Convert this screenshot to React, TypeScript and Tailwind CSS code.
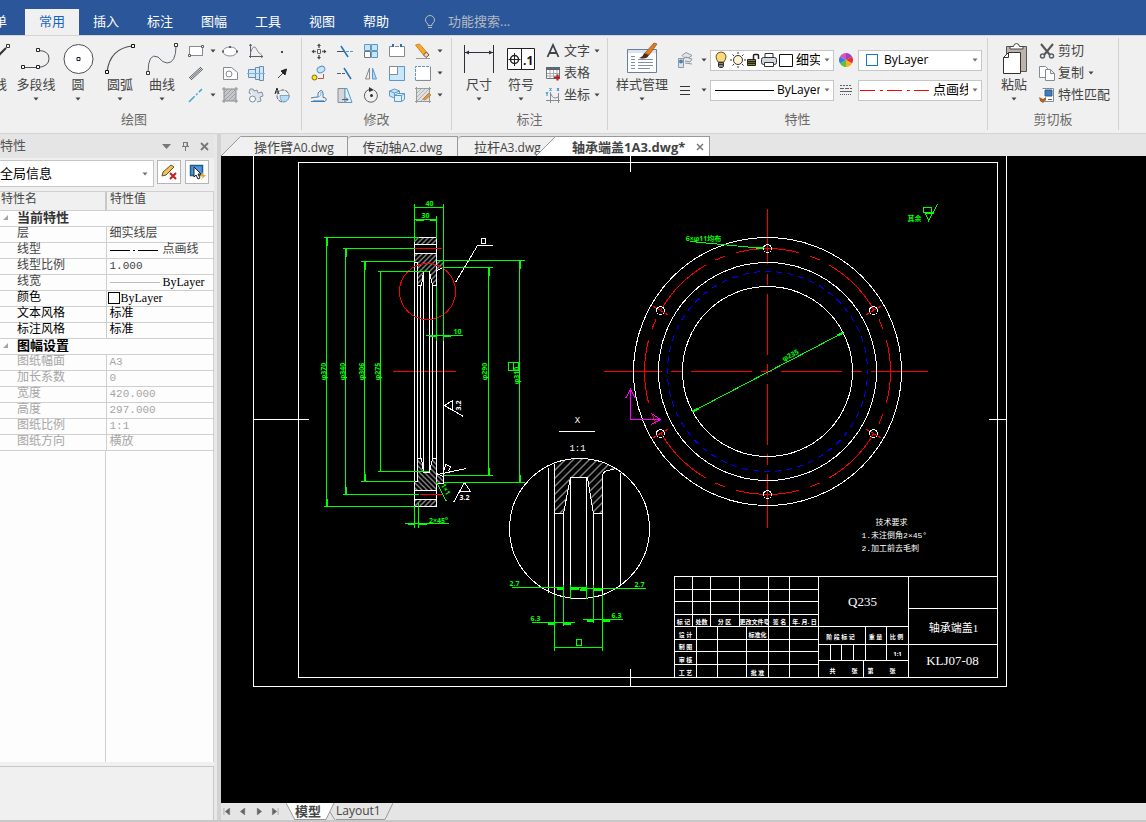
import React from 'react';

const RotatedText: React.FC<{ x: number; y: number; children: React.ReactNode; angle?: number }> = ({ x, y, children, angle = -90 }) => (
  <text x={x} y={y} transform={`rotate(${angle} ${x} ${y})`} textAnchor="middle">{children}</text>
);

const Caret: React.FC<{ className?: string }> = ({ className = 'text-[#444]' }) => (
  <svg width="6" height="4" viewBox="0 0 6 4" className={`flex-shrink-0 ${className}`} aria-hidden="true">
    <path d="M0.5 0.5h5L3 3.5z" fill="currentColor" />
  </svg>
);

const Glyph: React.FC<{ size?: number; children: React.ReactNode }> = ({ size = 20, children }) => (
  <svg width={size} height={size} viewBox={`0 0 ${size} ${size}`} fill="none" stroke="#5a5f68" className="flex-shrink-0" aria-hidden="true">
    {children}
  </svg>
);

const BigButton: React.FC<{ label: string; icon: React.ReactNode; className?: string }> = ({ label, icon, className = 'w-[42px]' }) => (
  <button type="button" className={`flex h-[70px] flex-shrink-0 flex-col items-center ${className}`}>
    <span className="flex h-9 items-center">{icon}</span>
    <span className="h-[18px] leading-[17px] whitespace-nowrap">{label}</span>
    <span className="flex h-[10px] items-center"><Caret /></span>
  </button>
);

const Group: React.FC<{ title: string; className?: string; children: React.ReactNode }> = ({ title, className = '', children }) => (
  <section aria-label={title} className="flex flex-shrink-0 flex-col border-r border-[#d2d2d2]">
    <div className={`flex h-[72px] pt-0.5 ${className}`}>{children}</div>
    <div className="h-5 text-center leading-[18px] text-[#6a6a6a]">{title}</div>
  </section>
);

const DRAW_TOOLS: { name: string; menu?: boolean; art: React.ReactNode }[] = [
  { name: '矩形', menu: true, art: <><rect x="3.5" y="5.5" width="13" height="9" fill="#fff" stroke="#858b93" /><path d="M2.500 13.500h2v2h-2zM15.500 4.500h2v2h-2z" fill="#fff" /></> },
  { name: '椭圆', art: <><ellipse cx="10" cy="10.500" rx="7" ry="4.500" fill="#fff" stroke="#858b93" /><path d="M2 9.500h2v2H2zM16 9.500h2v2h-2zM9 5h2v2H9z" fill="#5a5f68" stroke="none" /></> },
  { name: '公式曲线', art: <><path d="M4.500 3v14M3 15.500h14M3.500 5l1-2 1 2M15 14.500l2 1-2 1" /><path d="M4.500 12q3-10 6-4t5 5" stroke="#858b93" /></> },
  { name: '点', art: <rect x="9" y="10" width="2" height="2" fill="#444" stroke="none" /> },
  { name: '平行线', art: <path d="M3 15L15 4M5 17L17 6M4 16L16 5" stroke="#555b66" /> },
  { name: '正多边形', art: <><path d="M3.500 4.500h8l6 5v7h-14z" fill="#fff" stroke="#858b93" /><circle cx="9" cy="11" r="3" stroke="#858b93" /></> },
  { name: '孔/轴', art: <><path d="M2.500 6.500h7v8h-7zM9.500 4.500h4v12h-4zM13.500 3.500h4v14h-4z" fill="#d3e6f5" stroke="#6a8caf" /><path d="M1 10.500h18" stroke="#6bb7ee" /></> },
  { name: '箭头', art: <><path d="M6 15l6-6" stroke="#444" /><path d="M14.500 6l-1.500 6-4-4z" fill="#222" stroke="#222" /></> },
  { name: '中心线', menu: true, art: <path d="M3 17L16 4" stroke="#3da7dc" strokeWidth="1.500" strokeDasharray="8 2 2 2" /> },
  { name: '剖面线', art: <><path d="M4 4h12v12H4z" fill="#c5c8cb" stroke="none" /><path d="M4 2v16M16 2v16M2 4h16M2 16h16" stroke="#858b93" /><path d="M4 8l4-4M4 12l8-8M4 16L16 4M8 16l8-8M12 16l4-4" stroke="#9ba0a5" /></> },
  { name: '齿形', art: <><path d="M4 4h3l1 2 3-1 1 3 4-1 1 4-3 1 1 4-4 1M4 4L3 8l2 1" fill="#dbe4ee" stroke="#8791a0" /><circle cx="6.500" cy="14" r="3" fill="#fff" stroke="#7a869a" /></> },
  { name: '标注圆', art: <><path d="M3 9L5 3l2 6M3.500 7h3" stroke="#222" /><circle cx="11" cy="11" r="6" strokeDasharray="4 1" /><path d="M8 10.500h9q0 6-5 6-4 0-4-6z" fill="#b5def6" stroke="#79a9cc" /></> },
];

const MODIFY_TOOLS: { name: string; menu?: boolean; art: React.ReactNode }[] = [
  { name: '平移', art: <><path d="M8.500 8.500h3v4h-3z" /><path d="M10 4v3M10 14v3M4 10.500h3M13 10.500h3" strokeWidth="1.500" /><path d="M10 2.500l2 2.500H8zM10 18.500l2-2.500H8zM2.500 10.500L5 8.500v4zM17.500 10.500L15 8.500v4z" fill="#444" stroke="none" /></> },
  { name: '裁剪', art: <><path d="M2 10.500h8" stroke="#49505b" /><path d="M11 10.500h7" stroke="#3da7dc" strokeDasharray="3 1" /><path d="M6 5l7 11" stroke="#2372bd" strokeWidth="1.500" /></> },
  { name: '阵列', art: <><path d="M3.500 3.500h6v6h-6zM10.500 3.500h6v6h-6zM10.500 10.500h6v6h-6z" fill="#c8e4f6" stroke="#5b9ac8" /><path d="M3.500 10.500h6v6h-6z" fill="#fff" stroke="#6a7683" /></> },
  { name: '打断', art: <><path d="M5 5.500H2.500v10h15v-10H15M8 5.500h4" fill="#fff" stroke="#858b93" /><path d="M6 3v3M14 3v3" stroke="#2372bd" strokeWidth="2" /></> },
  { name: '删除', menu: true, art: <><path d="M2.500 4l4-1 7 8-3 3z" fill="#f7a72d" stroke="#d88a1e" /><path d="M10.500 14l3-3 2.500 3-3 2.500z" fill="#e9d5c3" stroke="#704c38" /><path d="M3 17.500h14" stroke="#999" /></> },
  { name: '平移复制', art: <><ellipse cx="12" cy="6.500" rx="4" ry="3" fill="#c8e4f6" stroke="#5b9ac8" transform="rotate(-25 12 6.500)" /><circle cx="5.500" cy="14.500" r="2.500" fill="#ffe500" stroke="#776a2d" /><path d="M9 15.500h5.500V11" stroke="#b3573e" /></> },
  { name: '延伸', art: <><path d="M2 10.500h8" strokeDasharray="4 1" /><path d="M9 5l7 11" stroke="#2372bd" strokeWidth="1.500" /></> },
  { name: '镜像', art: <><path d="M8.500 5v11h-4z" stroke="#858b93" /><path d="M11.500 5v11h4z" fill="#b4d9f2" stroke="#5b9ac8" /></> },
  { name: '缩放', art: <><path d="M2.500 3.500h15v14h-15z" fill="#c8e8fa" stroke="#5b9ac8" /><path d="M2.500 3.500h8v8h-8z" fill="#fff" stroke="#858b93" /></> },
  { name: '分解', menu: true, art: <><path d="M3 3.500h15v13H3z" fill="#fff" stroke="none" /><path d="M2.500 17V3.500H17" stroke="#5b9ac8" strokeDasharray="3 1" /><path d="M2.500 17.500h15v-14" stroke="#858b93" /></> },
  { name: '等距线', art: <><path d="M2 16.500h14q3-3-1-4h-1V8q-1-5-5 0v4q-3 0-7 1" stroke="#52789d" /><path d="M4 15.500h11M9 12q3 0 3-5" stroke="#6bb7ee" /></> },
  { name: '拉伸', art: <><path d="M3 3.500h7v14H3z" fill="#d5d8db" stroke="#858b93" /><path d="M10 3.500h2l5 14h-7z" fill="#dff1fb" stroke="#5b9ac8" /><path d="M7 14.500h6M11 12.500l2 2-2 2" /></> },
  { name: '旋转', art: <><path d="M8 4.500a6.500 6.500 0 1 0 5 .5" /><path d="M8 2l5 3-5 2z" fill="#333" stroke="none" /><circle cx="10.500" cy="10.500" r="1.500" fill="#333" stroke="none" /></> },
  { name: '块', art: <><path d="M2.500 6l5-2 5 2-5 2zM2.500 6v5l5 2V8M12.500 6v3" fill="#c8e4f6" stroke="#5b9ac8" /><path d="M7.500 10.500l3-2h7v6l-3 2h-7zM7.500 10.500h7v6M14.500 10.500l3-2" fill="#dff1fb" stroke="#5b9ac8" /></> },
  { name: '剖面编辑', menu: true, art: <><path d="M4 4h12v12H4z" fill="#e0e0e0" stroke="none" /><path d="M2 3.500h16M3.500 2v16M2 16.500h16M16.500 2v16" stroke="#949a9f" /><path d="M4 8l4-4M4 12l8-8M4 16L16 4M8 16l8-8" stroke="#b0b0b0" /><path d="M10 14l6-6 2 2-6 5z" fill="#e49b2d" stroke="#8d5e25" strokeWidth=".5" /></> },
];

const ToolCell: React.FC<{ name: string; children: React.ReactNode }> = ({ name, children }) => (
  <button type="button" aria-label={name} className="flex h-[22px] w-[26px] items-center justify-center">
    <Glyph>{children}</Glyph>
  </button>
);

const MenuCell: React.FC<{ name: string; show?: boolean }> = ({ name, show = true }) => (
  show ? (
    <button type="button" aria-label={`${name}选项`} className="flex h-[22px] w-2 items-center justify-center">
      <Caret />
    </button>
  ) : <span />
);

interface ComboProps {
  label: string;
  options: string[];
  children?: React.ReactNode;
  className?: string;
}

const Combo: React.FC<ComboProps> = ({ label, options, children, className = '' }) => (
  <label className={`flex items-center border border-[#c6c6c6] bg-white text-black ${className}`}>
    {children}
    <select aria-label={label} className="min-w-0 flex-1 appearance-none overflow-hidden bg-transparent whitespace-nowrap outline-none">
      {options.map(o => <option key={o}>{o}</option>)}
    </select>
    <Caret className="mr-[3px] ml-1 text-[#6e6e6e]" />
  </label>
);

const TextTool: React.FC<{ label: string; menu?: boolean; icon: React.ReactNode; iconClass: string }> = ({ label, menu, icon, iconClass }) => (
  <button type="button" className="flex h-[22px] items-center">
    <span className={`flex justify-center ${iconClass}`}>{icon}</span>
    <span className="whitespace-nowrap">{label}</span>
    {menu && <span className="flex w-[14px] justify-center"><Caret /></span>}
  </button>
);

const MENU_TABS = ['插入', '标注', '图幅', '工具', '视图', '帮助'];

const MenuBar = () => (
  <nav className="flex h-[35px] flex-shrink-0 items-end overflow-hidden bg-[#2b579a] text-white">
    <button type="button" className="mr-1 -ml-[33px] h-[26px] w-[54px] flex-shrink-0">菜单</button>
    <button type="button" className="h-[26px] w-[54px] flex-shrink-0 bg-[#f0f0f0] text-[#1565c0]">常用</button>
    {MENU_TABS.map(t => (
      <button key={t} type="button" className="h-[26px] w-[54px] flex-shrink-0">{t}</button>
    ))}
    <label className="ml-[21px] flex h-[26px] items-center gap-3 text-[#b5bac2]">
      <svg width="12" height="14" viewBox="0 0 12 14" fill="none" stroke="currentColor" aria-hidden="true">
        <path d="M4 10.500V9Q1.500 7.500 1.500 5a4.500 4.500 0 0 1 9 0Q10.500 7.500 8 9v1.500zM4 12.500h4" />
      </svg>
      <input aria-label="功能搜索" placeholder="功能搜索..." className="w-28 bg-transparent outline-none placeholder:text-[#b5bac2]" />
    </label>
  </nav>
);

const Ribbon = () => (
  <div className="flex h-[99px] flex-shrink-0 overflow-hidden border-y border-[#d5d5d5] bg-[#f0f0f0] pt-0.5 pb-[3px] text-[#444]">
    <div className="-ml-[33px] flex flex-shrink-0">
      <Group title="绘图" className="px-[6px]">
        <BigButton label="直线" icon={<Glyph size={36}><path d="M6 32L30 8" stroke="#333" strokeWidth="2" /><path d="M30.500 4.500h3v3h-3z" fill="#fff" stroke="#333" /></Glyph>} />
        <BigButton label="多段线" icon={<Glyph size={36}><path d="M6 27.500h14M20 10.500q11 0 11 8t-11 9" stroke="#4e4e58" /><path d="M3.500 25.500h3v3h-3zM18.500 25.500h3v3h-3zM18.500 8.500h3v3h-3z" fill="#fff" stroke="#23232b" /></Glyph>} />
        <BigButton label="圆" icon={<Glyph size={36}><circle cx="18.500" cy="19" r="14.500" fill="#fff" stroke="#4e4e58" /><path d="M17 17.500h3v3h-3z" fill="#fff" stroke="#23232b" /></Glyph>} />
        <BigButton label="圆弧" icon={<Glyph size={36}><path d="M5 32Q8 8 31 6" stroke="#4e4e58" strokeWidth="1.200" /><path d="M3.500 30.500h3v3h-3zM29.500 4.500h3v3h-3z" fill="#fff" stroke="#111" /></Glyph>} />
        <BigButton label="曲线" icon={<Glyph size={36}><path d="M4 33Q4 12 14 17q5 6 9 6Q32 23 32 6" stroke="#5b6270" /><path d="M2.500 31.500h3v3h-3zM30.500 3.500h3v3h-3z" fill="#fff" stroke="#333" /></Glyph>} />
        <div className="grid h-[66px] grid-cols-[26px_8px_26px_26px_26px]">
          {DRAW_TOOLS.map((t, i) => (
            <React.Fragment key={t.name}>
              <ToolCell name={t.name}>{t.art}</ToolCell>
              {i % 4 === 0 && <MenuCell name={t.name} show={t.menu === true} />}
            </React.Fragment>
          ))}
        </div>
      </Group>
    </div>

    <Group title="修改" className="pr-[7px] pl-1">
      <div className="grid h-[66px] grid-cols-[26px_26px_26px_26px_26px_8px]">
        {MODIFY_TOOLS.map((t, i) => (
          <React.Fragment key={t.name}>
            <ToolCell name={t.name}>{t.art}</ToolCell>
            {i % 5 === 4 && <MenuCell name={t.name} />}
          </React.Fragment>
        ))}
      </div>
    </Group>

    <Group title="标注" className="pr-[3px] pl-[6px]">
      <BigButton label="尺寸" icon={<Glyph size={36}><path d="M3.500 5v28M32.500 5v28M4 12.500h28" stroke="#2d3038" /><path d="M4 12.500l4-2v4zM32 12.500l-4-2v4z" fill="#2d3038" stroke="none" /></Glyph>} />
      <BigButton
        label="符号"
        icon={(
          <Glyph size={36}>
            <path d="M4.500 8.500h27v21h-27zM18.500 8.500v21" fill="#fff" stroke="#222" />
            <circle cx="11.500" cy="19.500" r="4" stroke="#222" strokeWidth="1.500" />
            <path d="M5.500 19.500h12M11.500 13v13" stroke="#222" />
            <text x="20" y="25" fontSize="12" fontWeight="700" fill="#111" stroke="none">.1</text>
          </Glyph>
        )}
      />
      <div>
        <TextTool label="文字" menu iconClass="w-[22px]" icon={<Glyph size={16}><path d="M2.500 14L8 2l5.500 12M4.500 10h7" stroke="#3e444d" strokeWidth="1.800" /></Glyph>} />
        <TextTool label="表格" iconClass="w-[22px]" icon={<Glyph size={16}><path d="M1.500 2.500h13v11h-13z" fill="#fff" stroke="#707780" /><path d="M1 2h14v3H1z" fill="#5f6670" stroke="none" /><path d="M2 8.500h12M2 11h12M5 5v8M8.500 5v8M12 5v8" stroke="#aaa" /><path d="M9 12.500h6M12.500 9.500v6" stroke="#b51f24" strokeWidth="2" /></Glyph>} />
        <TextTool label="坐标" menu iconClass="w-[22px]" icon={<Glyph size={16}><path d="M5.500 5v11M1 13.500h14M6 7q2 6 7 3M13.500 6v10" stroke="#858b93" /><path d="M4.500 1l2 3M6.500 1l-2 3M12 1l2 3M14 1l-2 3M1 5l1 2 1-2M2 7v2" stroke="#3a90ce" /></Glyph>} />
      </div>
    </Group>

    <Group title="特性" className="pr-[5px] pl-[6px]">
      <BigButton
        label="样式管理"
        className="w-[56px]"
        icon={(
          <Glyph size={36}>
            <path d="M3.500 9.500h29v23h-29z" fill="#fff" stroke="#6b7f96" />
            <path d="M4 10h28v3H4z" fill="#d8e4f0" stroke="none" />
            <path d="M7 16.500h4M7 19.500h4M7 22.500h4M7 25.500h4M7 28.500h4M14 19.500h15M14 22.500h15M14 25.500h15M14 28.500h12" stroke="#8190a2" />
            <path d="M21 13L30 3l3 1-8 11z" fill="#e07b22" stroke="#8f4b19" strokeWidth=".7" />
            <path d="M15 18q4-1 5-5l5 2q-2 5-10 3z" fill="#4c2b1b" stroke="none" />
          </Glyph>
        )}
      />
      <div className="pt-[5px]">
        <div className="flex h-[30px] items-center">
          <button type="button" aria-label="图层" className="flex w-[30px] justify-center">
            <Glyph size={18}><path d="M6 4.500l4-3 6 3-3 2H8zM7 8l3-2 6 2-2 3-5-1M9 12l7 1" fill="#e2e6ea" stroke="#8e969e" /><path d="M2.500 7.500h5v9h-5z" fill="#dce5ed" stroke="#8e969e" /><circle cx="5" cy="10.500" r="2" fill="#4682b8" stroke="none" /></Glyph>
          </button>
          <MenuCell name="图层" />
          <Combo label="图层选择" options={['细实线层']} className="ml-0.5 h-[21px] w-[124px] pl-0.5 text-[13px]">
            <svg width="83" height="18" viewBox="0 0 83 18" fill="none" stroke="#333" className="flex-shrink-0" aria-hidden="true">
              <path d="M5 11q-2-3-2-6 1-4 5-4t5 4q0 3-2 6z" fill="#ffd879" stroke="#6a5a3a" />
              <path d="M5.500 11.500h5v4l-1 1h-3l-1-1zM6 13.500h4" fill="#888" />
              <circle cx="25" cy="9" r="4.500" fill="#fff3d6" />
              <path d="M25 1v2M25 15v2M17 9h2M31 9h2M19.500 3.500l1.500 1.500M29 13l1.500 1.500M30.500 3.500L29 5M21 13l-1.500 1.500" />
              <path d="M34.500 8.500h8v6h-8z" fill="#a4ad1b" stroke="#222" />
              <path d="M34 10.500h9M34 12.500h9M40.500 8V4.500q0-1 1-1h3q1 0 1 1V8" stroke="#222" strokeWidth="1.500" />
              <path d="M52 7V2.500h8V7" fill="#fff" />
              <rect x="48.500" y="6.500" width="15" height="7" rx="2" fill="#d2d8dd" />
              <path d="M51.500 11.500h9v4h-9z" fill="#fff" />
              <path d="M66.500 3.500h13v12h-13z" fill="#fff" stroke="#111" />
            </svg>
          </Combo>
          <button type="button" aria-label="颜色" className="flex w-6 justify-center">
            <svg width="14" height="14" viewBox="0 0 14 14" aria-hidden="true">
              <path d="M7 7V0a7 7 0 0 1 6 3.500z" fill="#9b3fd0" />
              <path d="M7 7l6-3.500a7 7 0 0 1 0 7z" fill="#e93232" />
              <path d="M7 7l6 3.500A7 7 0 0 1 7 14z" fill="#f5b21b" />
              <path d="M7 7v7a7 7 0 0 1-6-3.500z" fill="#59c331" />
              <path d="M7 7l-6 3.500a7 7 0 0 1 0-7z" fill="#2d80e6" />
              <path d="M7 7L1 3.500A7 7 0 0 1 7 0z" fill="#e052b0" />
            </svg>
          </button>
          <Combo label="颜色选择" options={['ByLayer']} className="h-[21px] w-[124px] pl-[7px] text-xs">
            <span className="mr-[6px] h-3 w-3 flex-shrink-0 border border-[#1874cd]" />
          </Combo>
        </div>
        <div className="flex h-[30px] items-center">
          <button type="button" aria-label="线宽" className="flex w-[30px] justify-center">
            <Glyph size={12}><path d="M1 2.500h10M1 6.500h10M1 10.500h10" stroke="#333" /></Glyph>
          </button>
          <MenuCell name="线宽" />
          <Combo label="线宽选择" options={['ByLayer']} className="ml-0.5 h-[21px] w-[124px] pl-1 text-xs">
            <span className="mr-[3px] h-px w-[59px] flex-shrink-0 bg-black" />
          </Combo>
          <button type="button" aria-label="线型" className="flex w-6 justify-center">
            <Glyph size={14}><path d="M1 2.500h12" strokeDasharray="2 1" /><path d="M1 5.500h12" strokeDasharray="4 1" /><path d="M1 8.500h12" /><path d="M1 11.500h12" strokeDasharray="1 1" /></Glyph>
          </button>
          <Combo label="线型选择" options={['点画线']} className="h-[21px] w-[124px] pl-px text-[13px]">
            <svg width="73" height="3" className="flex-shrink-0" aria-hidden="true">
              <path d="M0 1.500h70" stroke="#f00" strokeDasharray="15 5 3 4" />
            </svg>
          </Combo>
        </div>
      </div>
    </Group>

    <Group title="剪切板" className="pr-2 pl-[5px]">
      <BigButton
        label="粘贴"
        icon={(
          <Glyph size={36}>
            <path d="M10.500 6.500h20v25h-20z" fill="#bdb3a8" stroke="#555" />
            <path d="M14 9V6.500h3.500Q18 3.500 20.500 3.500t3 3H27V9z" fill="#fff" stroke="#444" />
            <path d="M7.500 17.500l5-5h12v21h-17z" fill="#fff" stroke="#333" />
            <path d="M7.500 17.500h5v-5" stroke="#333" />
          </Glyph>
        )}
      />
      <div>
        <TextTool label="剪切" iconClass="w-[23px]" icon={<Glyph size={16}><path d="M2 1l9 11M14 1L5 12" stroke="#555" strokeWidth="2" /><circle cx="3.500" cy="13" r="2" strokeWidth="1.500" /><circle cx="12.500" cy="13" r="2" strokeWidth="1.500" /></Glyph>} />
        <TextTool label="复制" menu iconClass="w-[23px]" icon={<Glyph size={16}><path d="M.5 1.500h6l3 3v8h-9z" fill="#fff" stroke="#858b93" /><path d="M6.500 4.500h5l4 4v7h-9zM11.500 4.500v4h4" fill="#fff" stroke="#858b93" /></Glyph>} />
        <TextTool label="特性匹配" iconClass="w-[23px]" icon={<Glyph size={16}><path d="M3.500 1.500h11v13h-9" fill="#fff" stroke="#858b93" /><path d="M6 3h7v6H6z" fill="#3d7dba" stroke="#2d5d8a" /><path d="M9 12.500h4" /><path d="M0 10l4 2 3-2v3l-3 3-3-2z" fill="#a7632a" stroke="none" /></Glyph>} />
      </div>
    </Group>
  </div>
);

type Tone = 'gray' | 'black' | 'muted';

interface PropRow {
  name: string;
  value: React.ReactNode;
  tone: Tone;
}

const CURRENT_PROPS: PropRow[] = [
  { name: '层', value: '细实线层', tone: 'gray' },
  {
    name: '线型',
    tone: 'gray',
    value: (
      <span className="flex items-center gap-[3px]">
        <svg width="50" height="3" aria-hidden="true"><path d="M0 1.500h20M23 1.500h2M28 1.500h20" stroke="#000" /></svg>
        点画线
      </span>
    ),
  },
  { name: '线型比例', value: <span className="text-[11px]">1.000</span>, tone: 'gray' },
  {
    name: '线宽',
    tone: 'gray',
    value: <span className="flex items-center gap-[3px] font-['Liberation_Serif',serif] text-black"><span className="h-px w-[50px] bg-[#bbb]" />ByLayer</span>,
  },
  {
    name: '颜色',
    tone: 'black',
    value: <span className="-ml-0.5 flex items-center gap-px font-['Liberation_Serif',serif]"><span className="h-3 w-3 border border-black" />ByLayer</span>,
  },
  { name: '文本风格', value: '标准', tone: 'black' },
  { name: '标注风格', value: '标准', tone: 'black' },
];

const SHEET_PROPS: PropRow[] = [
  { name: '图纸幅面', value: <span className="text-[11px]">A3</span>, tone: 'muted' },
  { name: '加长系数', value: <span className="text-[11px]">0</span>, tone: 'muted' },
  { name: '宽度', value: <span className="text-[11px]">420.000</span>, tone: 'muted' },
  { name: '高度', value: <span className="text-[11px]">297.000</span>, tone: 'muted' },
  { name: '图纸比例', value: <span className="text-[11px]">1:1</span>, tone: 'muted' },
  { name: '图纸方向', value: '横放', tone: 'muted' },
];

const TONE_CLASSES: Record<Tone, string> = {
  gray: 'text-[#444]',
  black: 'text-black',
  muted: 'text-[#a6a6a6]',
};

const PropSection: React.FC<{ title: string; rows: PropRow[]; className: string }> = ({ title, rows, className }) => (
  <tbody>
    <tr className="h-4 border-b border-[#cfcfcf]">
      <th colSpan={2} className={`p-0 text-left text-[13px] leading-[15px] font-bold ${className}`}>
        <span className="flex items-center">
          <svg width="17" height="6" viewBox="0 0 17 6" aria-hidden="true"><path d="M8 0v5H3z" fill="#a5a5a5" /></svg>
          {title}
        </span>
      </th>
    </tr>
    {rows.map(r => (
      <tr key={r.name} className={`h-4 border-b border-[#cfcfcf] ${TONE_CLASSES[r.tone]}`}>
        <td className="border-r border-[#cfcfcf] p-0 pl-[17px] leading-[15px]">{r.name}</td>
        <td className="p-0 pl-[3px] leading-[15px] whitespace-nowrap">{r.value}</td>
      </tr>
    ))}
  </tbody>
);

const PropertyPanel = () => (
  <aside className="flex w-[214px] flex-shrink-0 flex-col bg-[#f0f0f0]">
    <div className="flex h-6 items-center bg-[#e5e5e5] text-[#555]">
      <h2 className="flex-1">特性</h2>
      <button type="button" aria-label="面板菜单" className="flex w-[19px] justify-center">
        <svg width="9" height="5" aria-hidden="true"><path d="M0 0h9L4.500 5z" fill="#777" /></svg>
      </button>
      <button type="button" aria-label="固定" className="flex w-[19px] justify-center">
        <svg width="9" height="10" fill="none" stroke="#777" aria-hidden="true"><path d="M2.500 1v4.500M6 1v4.500M2.500 1.500h4v4M1 5.500h7M4.500 6v4" /></svg>
      </button>
      <button type="button" aria-label="关闭面板" className="flex w-[19px] justify-center">
        <svg width="9" height="9" fill="none" stroke="#777" strokeWidth="1.800" aria-hidden="true"><path d="M1 1l7 7M8 1L1 8" /></svg>
      </button>
    </div>
    <div className="flex gap-[3px] pt-0.5 pb-1">
      <Combo label="选择范围" options={['全局信息']} className="-ml-px h-[27px] w-[155px] pr-0.5" />
      <button type="button" aria-label="清除选择" className="flex h-6 w-6 items-center justify-center border border-[#b5b5b5] bg-white">
        <svg width="18" height="18" viewBox="0 0 18 18" fill="none" aria-hidden="true">
          <path d="M2 13l1-4 8-7 3 2-8 8z" fill="#edc35a" stroke="#685023" />
          <path d="M10 10l6 6M16 10l-6 6" stroke="#c81e1e" strokeWidth="2" />
        </svg>
      </button>
      <button type="button" aria-label="快速选择" className="ml-px flex h-6 w-6 items-center justify-center border border-[#b5b5b5] bg-white">
        <svg width="18" height="18" viewBox="0 0 18 18" fill="none" aria-hidden="true">
          <path d="M2.500 2.500h12v10h-12z" fill="#4a98da" stroke="#225b94" strokeWidth="1.500" />
          <path d="M6 4v10l2-2 2 4 2-1-2-4h3z" fill="#fff" stroke="#222" />
          <path d="M15 9l-3 4h3l-2 4 5-5h-3z" fill="#f5a21b" />
        </svg>
      </button>
    </div>
    <div className="flex flex-1 flex-col border-t border-r border-[#d0d0d0] bg-[#fdfdfd]">
      <table className="w-full table-fixed border-collapse font-['Liberation_Mono','Noto_Sans_CJK_SC',monospace] text-xs">
        <colgroup>
          <col className="w-[106px]" />
          <col />
        </colgroup>
        <thead>
          <tr className="h-[18px] border-b border-[#cfcfcf] bg-[#f0f0f0] text-[#444]">
            <th className="border-r-2 border-[#c8c8c8] p-0 pl-px text-left leading-[17px] font-normal">特性名</th>
            <th className="p-0 pl-[3px] text-left leading-[17px] font-normal">特性值</th>
          </tr>
        </thead>
        <PropSection title="当前特性" rows={CURRENT_PROPS} className="text-[#333]" />
        <PropSection title="图幅设置" rows={SHEET_PROPS} className="text-black" />
      </table>
      <div className="w-[106px] flex-1 border-r border-[#cfcfcf]" />
    </div>
    <div className="mt-1 h-[54px] border-t border-r border-[#c8c8c8] bg-[#f0f0f0]" />
  </aside>
);

const Slope: React.FC<{ fill: string; className?: string }> = ({ fill, className = '' }) => (
  <svg width="20" height="20" viewBox="0 0 20 20" className={`relative flex-shrink-0 ${className}`} aria-hidden="true">
    <path d="M0 20L19.500.5H20V20z" fill={fill} />
    <path d="M0 20L19.500.5H20" fill="none" stroke="#999" />
  </svg>
);

const DocTab: React.FC<{ name: string; file: string; className: string }> = ({ name, file, className }) => (
  <button type="button" className={`h-5 border-t border-[#999] bg-[#f0f0f0] leading-[18px] whitespace-nowrap ${className}`}>
    {name}<span className="text-xs">{file}</span>
  </button>
);

const DocTabs = () => (
  <div className="flex h-[22px] flex-shrink-0 items-end bg-[#e5e5e5] text-[#444]">
    <Slope fill="#f0f0f0" />
    <DocTab name="操作臂" file="A0.dwg" className="w-[107px] border-r" />
    <DocTab name="传动轴" file="A2.dwg" className="w-[110px] rounded-tl-sm border-r" />
    <DocTab name="拉杆" file="A3.dwg" className="w-[98px] rounded-tl-sm pl-4 text-left" />
    <Slope fill="#fff" className="-ml-5" />
    <div className="relative flex h-5 items-center border-t border-r border-[#999] bg-white pl-4">
      <button type="button" className="w-[118px] text-left leading-[18px] font-bold whitespace-nowrap">轴承端盖1A3.dwg*</button>
      <button type="button" aria-label="关闭文档" className="flex w-[19px] justify-center">
        <svg width="8" height="8" fill="none" stroke="#777" strokeWidth="1.500" aria-hidden="true"><path d="M1 1l6 6M7 1L1 7" /></svg>
      </button>
    </div>
  </div>
);

const LayoutTabs = () => (
  <div className="flex h-[17px] flex-shrink-0 bg-[#e5e5e5] pl-0.5 text-[#444]">
    <div className="mr-[7px] flex items-center gap-2">
      {[
        { name: '第一个', d: 'M.5 0v8M7 0L2 4l5 4z' },
        { name: '上一个', d: 'M6 0L1 4l5 4z' },
        { name: '下一个', d: 'M2 0l5 4-5 4z' },
        { name: '最后一个', d: 'M1 0l5 4-5 4zM7.500 0v8' },
      ].map(b => (
        <button key={b.name} type="button" aria-label={b.name}>
          <svg width="8" height="7" viewBox="0 0 8 8" fill="#666" stroke="#666" strokeWidth=".5" aria-hidden="true"><path d={b.d} /></svg>
        </button>
      ))}
    </div>
    <svg width="9" height="17" className="flex-shrink-0" aria-hidden="true"><path d="M0 0h9v17z" fill="#fff" /><path d="M0 0l9 17" stroke="#999" /></svg>
    <button type="button" className="border-b border-[#999] bg-white leading-[15px] font-bold">模型</button>
    <svg width="15" height="17" className="flex-shrink-0" aria-hidden="true"><path d="M0 0h13L5 17H0z" fill="#fff" /><path d="M13 0L5 16.500H0M9 9l5 8" fill="none" stroke="#999" /></svg>
    <button type="button" className="border-b border-[#999] text-xs leading-[14px]">Layout1</button>
    <svg width="12" height="17" className="flex-shrink-0" aria-hidden="true"><path d="M12 0L4 16.500H0" fill="none" stroke="#999" /></svg>
  </div>
);

// bolt holes sit on a 123 radius pitch circle, every 60 degrees
const HOLES: [number, number, number][] = [
  [0, 767, 248], [60, 873, 310], [120, 873, 433], [180, 767, 494], [240, 660, 433], [300, 660, 310],
];

const TITLE_LABELS: [number, number, string][] = [
  [683, 623, '标 记'], [701, 623, '处数'], [724, 623, '分 区'], [754, 623, '更改文件号'], [779, 623, '签 名'], [804, 623, '年. 月. 日'],
  [685, 636, '设 计'], [757, 636, '标准化'], [685, 648, '制 图'], [685, 661, '审 核'], [685, 674, '工 艺'], [757, 674, '批 准'],
  [840, 638, '阶 段 标 记'], [875, 638, '重 量'], [896, 638, '比 例'], [897, 655, '1:1'],
  [832, 672, '共'], [854, 672, '张'], [870, 672, '第'], [892, 672, '张'],
];

const SECTION_END = 'M414 253H436V260H443V267L438 269L436 271V285H432L429 271H423L421 285H417V262H414Z';

const Drawing = () => (
  <svg className="block h-full w-full bg-black" role="img" aria-label="轴承端盖1A3.dwg">
    <defs>
      <pattern id="hatch" width="5" height="5" patternUnits="userSpaceOnUse">
        <path d="M0 4h1v1H0zM1 3h1v1H1zM2 2h1v1H2zM3 1h1v1H3zM4 0h1v1H4z" fill="#fff" shapeRendering="crispEdges" />
      </pattern>
      <pattern id="hatchWide" width="8" height="8" patternUnits="userSpaceOnUse">
        <path d="M0 7h1v1H0zM1 6h1v1H1zM2 5h1v1H2zM3 4h1v1H3zM4 3h1v1H4zM5 2h1v1H5zM6 1h1v1H6zM7 0h1v1H7z" fill="#fff" shapeRendering="crispEdges" />
      </pattern>
    </defs>
    {/* whole coordinates fall on pixel centres */}
    <g transform="translate(-220.5 -155.5)" fill="none" shapeRendering="crispEdges">
      {/* sheet frame */}
      <path stroke="#fff" d="M253 150V686H1006V150M298 162H997V677H298ZM630 150V171M630 668V686M253 419H308M988 419H1006" />

      {/* centre lines */}
      <g stroke="#f00">
        <path d="M603 371H661M670 371H681M690 371H751M760 371H771M780 371H841M850 371H861M870 371H927" />
        <path d="M767 208V263M767 273V284M767 293V354M767 363V374M767 383V444M767 453V464M767 473V527" />
        <path d="M392 371H455" />
      </g>

      {/* front view */}
      <circle cx="767" cy="371" r="123" stroke="#f00" pathLength="360" strokeDasharray="30 5 5 5" strokeDashoffset="15" />
      <circle cx="767" cy="371" r="100" stroke="#00f" strokeDasharray="6 5.220" strokeDashoffset="3" />
      <g stroke="#fff">
        <circle cx="767" cy="371" r="134" />
        <circle cx="767" cy="371" r="109" />
        <circle cx="767" cy="371" r="85" />
      </g>
      {HOLES.map(([angle, cx, cy]) => (
        <g key={angle}>
          <path d={`M${cx} ${cy - 9}V${cy + 9}`} stroke="#f00" transform={`rotate(${angle} ${cx} ${cy})`} />
          <circle cx={cx} cy={cy} r="4" stroke="#fff" />
        </g>
      ))}
      <path d="M692 411L843 332M690 241L763 248" stroke="#0f0" />
      <path d="M692 411l6-3M843 332l-6 3M763 248l-7-1" stroke="#0f0" strokeWidth="2" />

      {/* section view */}
      <path d="M414 237H436V244H414ZM414 499H436V506H414Z" fill="url(#hatch)" />
      <path d={SECTION_END} fill="url(#hatch)" />
      <path d={SECTION_END} fill="url(#hatch)" transform="matrix(1 0 0 -1 0 743)" />
      <g stroke="#fff">
        <path d="M414 237H436V244H414ZM414 499H436V506H414Z" />
        <path d={SECTION_END} />
        <path d={SECTION_END} transform="matrix(1 0 0 -1 0 743)" />
        <path d="M414 237V506M417 262V481M420 285V458M423 271V472M429 271V472M432 285V458M436 237V506M443 260V482" />
        <path d="M455 282L477 245H492M481 238h4v5h-4zM444 405L452 400V410ZM444 405L463 416" />
        <path d="M464 482L459 491H470ZM464 482L453 502M437 474L466 468M444 470l1-6 5 2-2 5" />
      </g>
      <circle cx="427" cy="291" r="28" stroke="#f00" />
      <path d="M414 248H441M419 494H441" stroke="#f00" />

      {/* section dimensions */}
      <g stroke="#0f0">
        <path d="M414 203V241M443 203V340M414 207H443M436 215V238M414 219H436" />
        <path d="M326 237V506M323 237H418M323 506H414M345 248V494M342 248H414M342 494H418" />
        <path d="M364 261V481M360 261H414M360 481H414M380 271V471M377 271H428M377 471H428" />
        <path d="M488 267V475M443 267H492M443 475H492M519 260V482M436 260H524M443 482H524" />
        <path d="M436 285V340M425 335H462M414 506V527M418 502V527M404 523H448M436 482L446 501" />
        <path d="M508 362h5v8h-5zM513 362h5v8h-5z" />
        <path
          strokeWidth="2"
          d="M326 237v8M326 506v-8M345 248v8M345 494v-8M364 261v8M364 481v-8M488 267v8M488 475v-8M519 260v8M519 482v-8M415 219h8M436 219h-7M436 335h-7M443 335h7M414 523h-7M418 523h8"
        />
      </g>

      {/* detail view */}
      <path
        d="M554 463Q578 454 603 463L616 468L605 471L602 475V513H593L587 477H570L563 513H554Z"
        fill="url(#hatchWide)"
      />
      <g stroke="#fff">
        <circle cx="579" cy="528" r="70" />
        <path d="M548 467V592M554 463V594M563 513V584M570 477V585M586 477V585M593 513V584M602 475V594M620 472V585" />
        <path d="M554 513H563L570 477H587L593 513H602V475Q603 470 608 470L615 468M558 431H594" />
      </g>
      <g stroke="#0f0">
        <path d="M554 594V650M563 584V625M570 584V598M586 584V598M593 584V622M602 594V650" />
        <path d="M511 587H563M570 587H586M580 588H645M531 622H574M582 619H622M554 647H602M576 639h5v6h-5z" />
        <path strokeWidth="2" d="M563 588h-7M570 588h8M586 589h-7M593 589h8M554 623h-7M563 623h7M593 620h-7M602 620h7" />
      </g>

      {/* coordinate origin */}
      <path d="M630 390V419H660M625 398L630 389L635 398M651 413L660 419L651 424" stroke="#f0f" />

      {/* default roughness */}
      <path d="M923 207h8v5h-8zM924 213H933M925 213L928 220L937 204" stroke="#0f0" />

      {/* title block */}
      <g stroke="#fff">
        <path d="M674 677V576H997M674 589H818M674 601H818M674 614H818M674 626H908M674 639H818M674 651H818M674 664H818" />
        <path d="M692 576V626M710 576V626M739 576V626M768 576V677M789 576V677M818 576V677M696 626V677M717 626V677M746 626V677" />
        <path d="M818 644H908M818 660H908M865 626V660M886 626V660M830 644V660M841 644V660M853 644V660M863 660V677" />
        <path d="M908 576V677M908 608H997M908 644H997" />
      </g>

      <g fill="#0f0" fontSize="7" fontWeight="700" textAnchor="middle">
        <text x="429" y="205">40</text>
        <text x="425" y="217">30</text>
        <text x="457" y="333">10</text>
        <text x="438" y="522">2×45°</text>
        <text x="703" y="240">6×φ11均布</text>
        <text x="514" y="585">2.7</text>
        <text x="639" y="586">2.7</text>
        <text x="535" y="620">6.3</text>
        <text x="616" y="617">6.3</text>
        <text x="914" y="220">其余</text>
        <RotatedText x={325} y={371}>φ370</RotatedText>
        <RotatedText x={344} y={371}>φ340</RotatedText>
        <RotatedText x={363} y={371}>φ306</RotatedText>
        <RotatedText x={379} y={371}>φ275</RotatedText>
        <RotatedText x={486} y={371}>φ290</RotatedText>
        <RotatedText x={518} y={375}>φ310</RotatedText>
        <RotatedText x={791} y={357} angle={-27}>φ235</RotatedText>
        <RotatedText x={443} y={490} angle={60}>1×1</RotatedText>
      </g>
      <g fill="#fff" textAnchor="middle">
        <g fontSize="7" fontWeight="700">
          <RotatedText x={460} y={405}>3.2</RotatedText>
          <text x="464" y="499">3.2</text>
        </g>
        <g fontSize="9" fontFamily="Liberation Mono, monospace">
          <text x="577" y="422">X</text>
          <text x="577" y="450">1:1</text>
        </g>
        <g fontSize="6" fontWeight="700">
          {TITLE_LABELS.map(([x, y, label]) => <text key={`${x}-${y}`} x={x} y={y}>{label}</text>)}
        </g>
        <g fontSize="13" fontFamily="Liberation Serif, Noto Sans CJK SC, serif">
          <text x="862" y="605">Q235</text>
          <text x="952" y="664">KLJ07-08</text>
          <text x="953" y="631" fontSize="11">轴承端盖1</text>
        </g>
      </g>
      <g fill="#fff" fontSize="8" fontFamily="Liberation Mono, Noto Sans CJK SC, monospace">
        <text x="875" y="524">技术要求</text>
        <text x="861" y="537">1.未注倒角2×45°</text>
        <text x="861" y="550">2.加工前去毛刺</text>
      </g>
    </g>
  </svg>
);

const App = () => (
  <div className="flex h-screen flex-col overflow-hidden border-b-2 border-[#c8c8c8] bg-[#f0f0f0] font-['Open_Sans','Noto_Sans_CJK_SC',sans-serif] text-[13px]">
    <MenuBar />
    <Ribbon />
    <div className="flex min-h-0 flex-1">
      <PropertyPanel />
      <div className="w-[7px] flex-shrink-0 border-r-4 border-[#d2d2d2] bg-[#e8e8e8]" />
      <main className="flex min-w-0 flex-1 flex-col">
        <DocTabs />
        <div className="min-h-0 flex-1">
          <Drawing />
        </div>
        <LayoutTabs />
      </main>
    </div>
  </div>
);

export default App;
